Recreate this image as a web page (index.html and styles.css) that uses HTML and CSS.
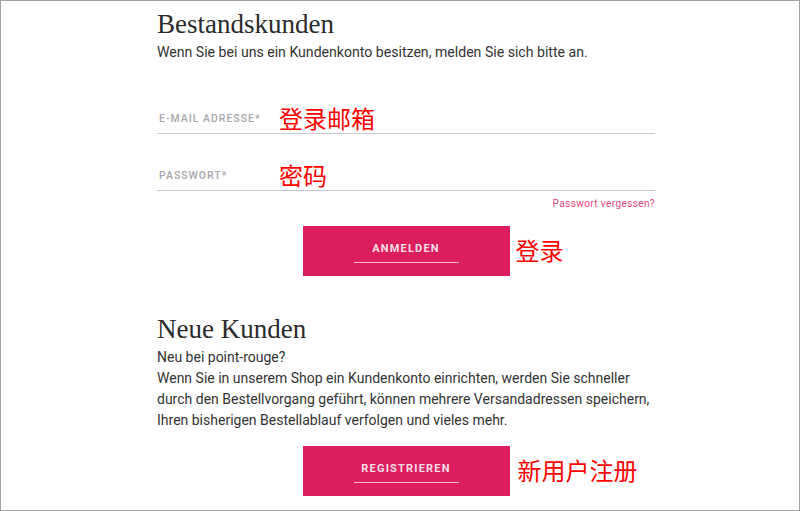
FILE: index.html
```html
<!DOCTYPE html>
<html lang="de">
<head>
  <meta charset="UTF-8" />
  <meta name="viewport" content="width=device-width, initial-scale=1.0"/>
  <title>Anmelden</title>
  <link rel="stylesheet" href="styles.css">
</head>
<body>
  <div class="frame">
    <div class="column">
      <h2>Bestandskunden</h2>
      <p class="intro">Wenn Sie bei uns ein Kundenkonto besitzen, melden Sie sich bitte an.</p>

      <div class="field first">
        <span class="label">E-Mail Adresse*</span>
        <span class="note">登录邮箱</span>
      </div>
      <div class="field">
        <span class="label">Passwort*</span>
        <span class="note">密码</span>
      </div>
      <div class="forgot"><a href="#">Passwort vergessen?</a></div>

      <div class="action">
        <div class="btn-wrap">
          <button class="btn">Anmelden</button>
          <span class="note side">登录</span>
        </div>
      </div>

      <h2 class="second">Neue Kunden</h2>
      <p class="text">Neu bei point-rouge?<br>
        Wenn Sie in unserem Shop ein Kundenkonto einrichten, werden Sie schneller durch den Bestellvorgang geführt, können mehrere Versandadressen speichern, Ihren bisherigen Bestellablauf verfolgen und vieles mehr.</p>

      <div class="action register">
        <div class="btn-wrap">
          <button class="btn">Registrieren</button>
          <span class="note side wide">新用户注册</span>
        </div>
      </div>
    </div>
  </div>
</body>
</html>
```

FILE: styles.css
```css
* {
  box-sizing: border-box;
}
body {
  margin: 0;
  font-family: 'Roboto', 'Noto Sans', sans-serif;
  color: #333;
  background: #fff;
}

.frame {
  width: 800px;
  height: 511px;
  border: 1px solid #a3a3a3;
  overflow: hidden;
}

.column {
  width: 498px;
  margin-left: 156px;
}

h2 {
  margin: 0;
  padding-top: 8px;
  font-family: 'Liberation Serif', 'DejaVu Serif', serif;
  font-weight: normal;
  font-size: 27px;
  line-height: 30px;
  color: #2b2b2b;
}

.intro {
  margin: 3px 0 0;
  font-size: 14.1px;
  line-height: 20px;
}

/* input rows: label + line */
.field {
  display: flex;
  align-items: center;
  height: 57px;
  padding: 27px 0 1px;
  border-bottom: 1px solid #c9c9cd;
}
.field.first {
  margin-top: 15px;
}

.label {
  width: 122px;
  padding-left: 2px;
  font-size: 10.5px;
  letter-spacing: 1px;
  text-transform: uppercase;
  color: #a8a8ae;
  font-weight: 500;
}

.note {
  font-family: 'Noto Sans CJK SC', sans-serif;
  font-size: 24px;
  line-height: 28px;
  color: #ff0000;
}

.forgot {
  text-align: right;
  margin-top: 7px;
  font-size: 10px;
  line-height: 12px;
  letter-spacing: 0.4px;
}
.forgot a {
  color: #e0457a;
  text-decoration: none;
}

.action {
  display: flex;
  justify-content: center;
  margin-top: 16px;
}

.btn-wrap {
  position: relative;
}

.btn {
  display: block;
  width: 207px;
  height: 50px;
  padding: 0 0 6px;
  border: none;
  background: #dc1e5f;
  color: #f7dce6;
  font-family: 'Roboto', sans-serif;
  font-weight: 700;
  font-size: 11px;
  letter-spacing: 1.2px;
  text-transform: uppercase;
  position: relative;
}
.btn::after {
  content: '';
  position: absolute;
  left: 51px;
  right: 51px;
  bottom: 13px;
  height: 1px;
  background: #f3b9cd;
}

.note.side {
  position: absolute;
  left: 100%;
  top: 10px;
  margin-left: 6px;
  white-space: nowrap;
}
.note.side.wide {
  margin-left: 8px;
}

.second {
  margin-top: 30px;
}

.text {
  margin: 3px 0 0;
  font-size: 14px;
  line-height: 21px;
}

.register {
  margin-top: 15px;
}
```
